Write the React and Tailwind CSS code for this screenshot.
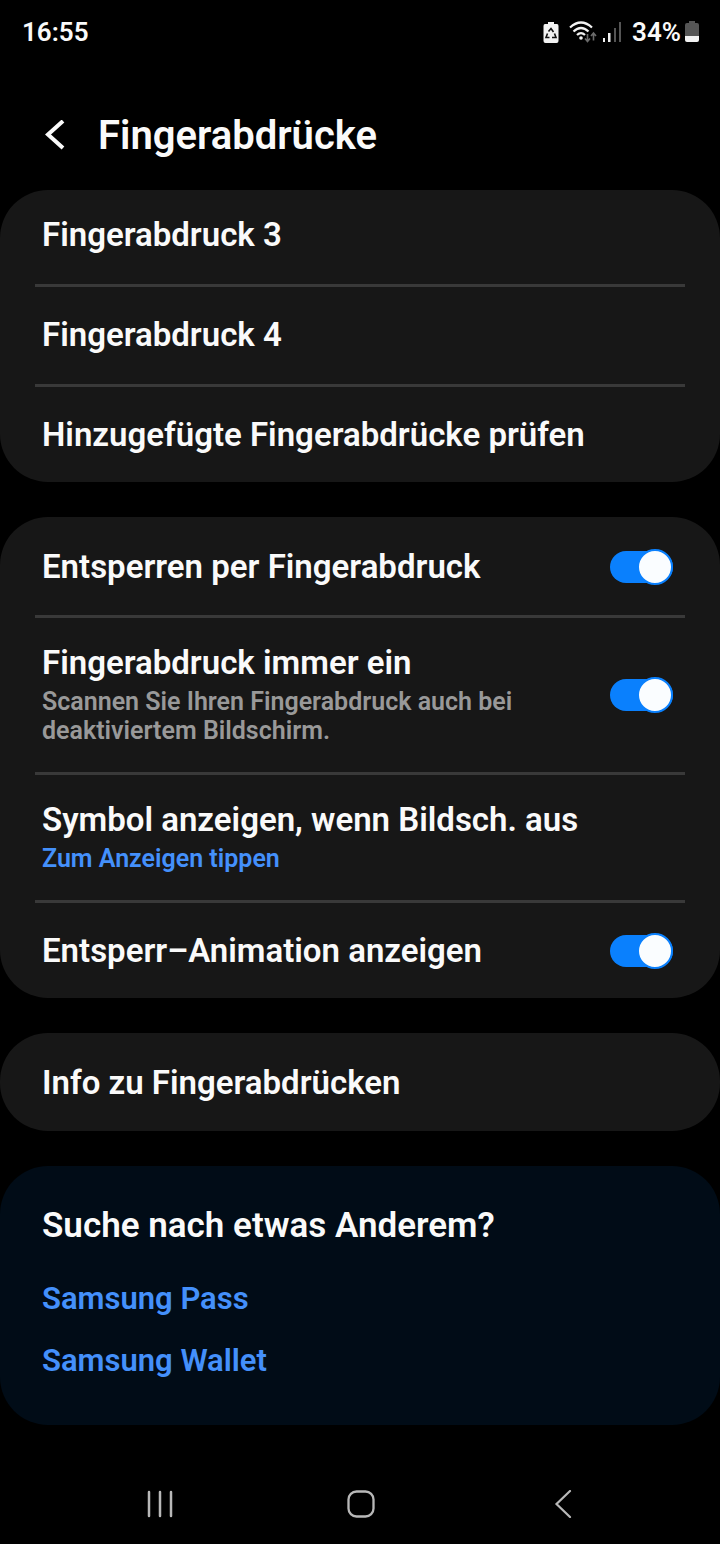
import { useState } from 'react'

const LINKS = ['Samsung Pass', 'Samsung Wallet']

export default function App() {
  return (
    <div className="min-h-screen flex flex-col bg-black text-[#fafafa] font-['Roboto','Liberation_Sans',sans-serif] font-semibold">
      <StatusBar />

      <header className="flex items-center gap-8 px-11 pt-12 pb-[30px]">
        <button type="button" aria-label="Zurück">
          <svg viewBox="0 0 22 32" className="w-[22px] h-8" fill="none" stroke="currentColor" strokeWidth="4">
            <path d="M19 1 4 14.500 19 28" />
          </svg>
        </button>
        <h1 className="text-[40px] leading-[48px]">Fingerabdrücke</h1>
      </header>

      <main className="flex flex-col gap-[35px]">
        <Card>
          <Row title="Fingerabdruck 3" className="pt-[25px] pb-[29px]" />
          <Row title="Fingerabdruck 4" />
          <Row title="Hinzugefügte Fingerabdrücke prüfen" />
        </Card>

        <Card>
          <ToggleRow id="unlock" title="Entsperren per Fingerabdruck" className="pt-[30px] pb-7" />
          <ToggleRow id="always-on" title="Fingerabdruck immer ein" className="pt-[25px] pb-[26px]"
            note="Scannen Sie Ihren Fingerabdruck auch bei deaktiviertem Bildschirm." />
          <Row title="Symbol anzeigen, wenn Bildsch. aus" value="Zum Anzeigen tippen" className="pt-[25px] pb-[26px]" />
          <ToggleRow id="animation" title="Entsperr–Animation anzeigen" />
        </Card>

        <Card>
          <Row title="Info zu Fingerabdrücken" className="pt-[30px] pb-7" />
        </Card>

        <section className="rounded-[48px] bg-[#010c17] px-[42px] pt-10 pb-[33px]">
          <h2 className="text-[35px] leading-10">Suche nach etwas Anderem?</h2>
          <ul className="pt-[22px]">
            {LINKS.map(l => (
              <li key={l} className="py-[11px] text-[31px] leading-10 text-[#4490fb]">
                <a href="#">{l}</a>
              </li>
            ))}
          </ul>
        </section>
      </main>

      <NavBar />
    </div>
  )
}

function Card({ children }) {
  return (
    <ul className="rounded-[48px] bg-[#171717] px-[35px] divide-y-3 divide-[#393939]">
      {children}
    </ul>
  )
}

function Row({ title, value, className = 'pt-7 pb-[29px] last:pb-[27px]' }) {
  return (
    <li className={className}>
      <button type="button" className="block w-full px-[7px] text-left">
        <span className="block text-[33px] leading-10">{title}</span>
        {value && <span className="block pt-1 text-[25px] leading-[29px] pb-px text-[#4490fb]">{value}</span>}
      </button>
    </li>
  )
}

function ToggleRow({ id, title, note, className = 'pt-7 pb-[27px]' }) {
  const [on, setOn] = useState(true)

  return (
    <li className={className}>
      <div className="flex items-center justify-between gap-16 pl-[7px] pr-3">
        <label htmlFor={id}>
          <span className="block text-[33px] leading-10">{title}</span>
          {note && <span className="block pt-1 text-[25px] leading-[29px] pb-px text-[#999999]">{note}</span>}
        </label>
        <input id={id} type="checkbox" role="switch" checked={on} onChange={e => setOn(e.target.checked)}
          className="relative shrink-0 appearance-none w-[63px] h-8 rounded-full bg-neutral-600 checked:bg-[#0a80fd] before:absolute before:-top-0.5 before:left-0 before:size-9 before:rounded-full before:border-2 before:border-neutral-600 before:bg-[#fafdff] checked:before:left-[27px] checked:before:border-[#0a80fd]" />
      </div>
    </li>
  )
}

function StatusBar() {
  return (
    <div className="flex items-center justify-between h-16 pl-[22px] pr-[21px] text-[26px] leading-8">
      <span>16:55</span>
      <div className="flex items-center">
        {/* battery saver */}
        <svg viewBox="0 0 16 22" className="w-4 h-[22px] mr-2.5">
          <path d="M5 1h6v2h3q1.500 0 1.500 2v15q0 2-2 2h-11q-2 0-2-2V5q0-2 1.500-2h3z" fill="#f2f2f2" />
          <g fill="none" stroke="#111111" strokeWidth="1.600">
            <path d="M5.500 10.500 8 7.500l2.500 3.500M11.500 12.500l1.500 4H9M6.500 16.500H3l1.500-4" />
          </g>
        </svg>
        {/* wifi with traffic arrows */}
        <svg viewBox="0 0 28 24" className="w-7 h-6 mr-1.5" fill="none">
          <g stroke="#f2f2f2" strokeWidth="2.200">
            <path d="M1 7.500Q12 -2.500 23 7.500" />
            <path d="M4.500 11.500Q12 4.500 19.500 11.500" />
            <path d="M8 15Q12 11 16 15" />
          </g>
          <circle cx="12" cy="18" r="1.800" fill="#f2f2f2" />
          <path d="M18.500 14v7M16 18.500l2.500 3 2.500-3M24.500 20.500v-7M22 16l2.500-3 2.500 3" stroke="#6b6b6b" strokeWidth="1.600" />
        </svg>
        {/* signal */}
        <svg viewBox="0 0 19 20" className="w-[19px] h-5 mr-2.5">
          <path d="M0 16h2v4H0zM5 11h2.500v9H5z" fill="#f2f2f2" />
          <path d="M11 6h2v14h-2zM16 0h2v20h-2z" fill="#555555" />
        </svg>
        <span>34%</span>
        <svg viewBox="0 0 14 22" className="w-3.5 h-[22px] ml-1">
          <path d="M4 0h6v2h2q2 0 2 2v11H0V4q0-2 2-2h2z" fill="#555555" />
          <path d="M0 15h14v4q0 2-2 2H2q-2 0-2-2z" fill="#f2f2f2" />
        </svg>
      </div>
    </div>
  )
}

function NavBar() {
  return (
    <nav className="mt-auto grid grid-cols-3 pl-[59px] pr-14 h-20 text-[#b8b8b8]">
      <button type="button" aria-label="Letzte Apps" className="flex items-center justify-center">
        <svg viewBox="0 0 28 28" className="size-7" fill="none" stroke="currentColor" strokeWidth="2.500" strokeLinecap="round">
          <path d="M3 2v24M14 2v24M25 2v24" />
        </svg>
      </button>
      <button type="button" aria-label="Startseite" className="flex items-center justify-center">
        <svg viewBox="0 0 28 28" className="size-7" fill="none" stroke="currentColor" strokeWidth="2.300">
          <rect x="1.500" y="1.500" width="25" height="25" rx="8" />
        </svg>
      </button>
      <button type="button" aria-label="Zurück" className="flex items-center justify-center">
        <svg viewBox="0 0 28 28" className="size-7" fill="none" stroke="currentColor" strokeWidth="2.200" strokeLinecap="round">
          <path d="M21 1 7.500 14 21 27" />
        </svg>
      </button>
    </nav>
  )
}
